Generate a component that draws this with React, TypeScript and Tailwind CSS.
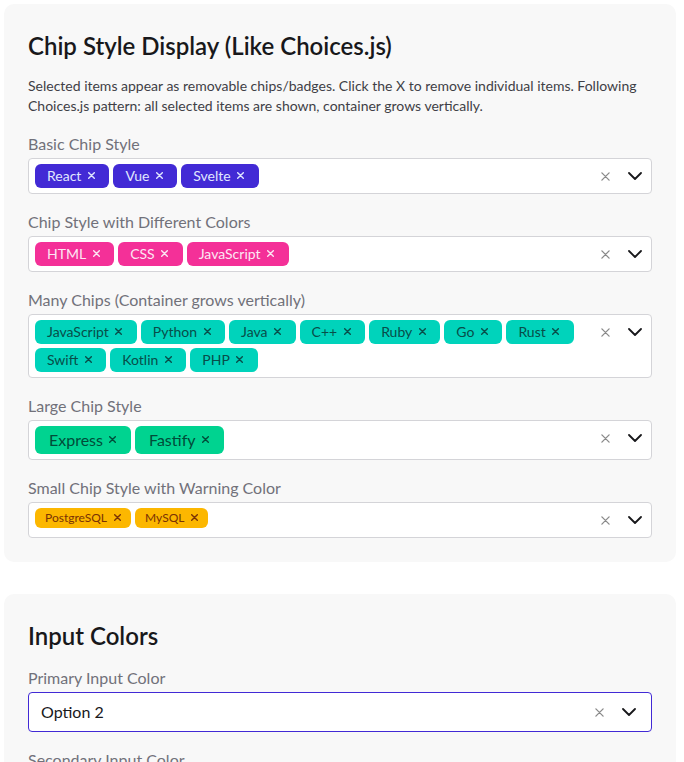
import type { ReactNode } from 'react'

/**
 * Chip style select demo
 * Static recreation of a Choices.js-like multi select with chips
 */

type Tone = 'primary' | 'secondary' | 'accent' | 'success' | 'warning'
type Size = 'sm' | 'md' | 'lg'

const toneClasses: Record<Tone, string> = {
  primary: 'bg-[#422ad5] text-[#e0e7ff]',
  secondary: 'bg-[#f43098] text-[#fce7f3]',
  accent: 'bg-[#00d3bb] text-[#084d49]',
  success: 'bg-[#00d390] text-[#004c39]',
  warning: 'bg-[#fcb700] text-[#793205]',
}

const sizeClasses: Record<Size, string> = {
  sm: 'h-5 pl-2.5 pr-2 text-xs',
  md: 'h-6 px-3 text-sm',
  lg: 'h-7 pl-3.5 pr-3 text-base',
}

const FONT = 'font-["Lato","Liberation_Sans",sans-serif]'

function CloseGlyph({ size = 7, width = 1.4 }: { size?: number; width?: number }) {
  return (
    <svg width={size} height={size} viewBox="0 0 10 10" fill="none">
      <path d="M1 1l8 8M9 1l-8 8" stroke="currentColor" strokeWidth={width * (10 / size)} strokeLinecap="round" />
    </svg>
  )
}

function Indicators() {
  return (
    <div className="flex h-6 items-center">
      <span className="flex w-[30px] justify-center text-[#8a8a8a]">
        <CloseGlyph size={9} width={1.3} />
      </span>
      <span className="flex w-[30px] justify-center text-[#18181b]">
        <svg width="14" height="8" viewBox="0 0 14 8" fill="none">
          <path d="M1 1l6 6 6-6" stroke="currentColor" strokeWidth="1.8" strokeLinecap="round" strokeLinejoin="round" />
        </svg>
      </span>
    </div>
  )
}

function Chip({ label, tone, size }: { label: string; tone: Tone; size: Size }) {
  return (
    <span className={`inline-flex items-center gap-1 rounded-md ${toneClasses[tone]} ${sizeClasses[size]}`}>
      <span className="leading-none">{label}</span>
      <span className="-mt-0.5 flex w-3 justify-center">
        <CloseGlyph />
      </span>
    </span>
  )
}

function Field({ label, children }: { label: string; children: ReactNode }) {
  return (
    <div>
      <div className="mb-0.5 text-base leading-6 text-[#71717a]">{label}</div>
      {children}
    </div>
  )
}

function ChipSelect({ items, tone, size = 'md' }: { items: string[]; tone: Tone; size?: Size }) {
  return (
    <div className="flex min-h-9 items-start rounded border border-[#d4d4d8] bg-white py-[5px] pl-[6px] pr-px">
      <div className="flex flex-1 flex-wrap gap-1">
        {items.map((item) => (
          <Chip key={item} label={item} tone={tone} size={size} />
        ))}
      </div>
      <Indicators />
    </div>
  )
}

function SingleSelect({ value, border }: { value: string; border: string }) {
  return (
    <div className={`flex h-10 items-center rounded border bg-white pl-3 pr-[7px] ${border}`}>
      <span className="flex-1 text-base text-[#18181b]">{value}</span>
      <Indicators />
    </div>
  )
}

function Card({ title, children }: { title: string; children: ReactNode }) {
  return (
    <section className="mb-8 rounded-[10px] bg-[#f8f8f8] p-6">
      <h2 className="mt-0.5 mb-3.5 text-2xl leading-8 font-semibold text-[#18181b]">{title}</h2>
      {children}
    </section>
  )
}

export default function App() {
  return (
    <div className={`min-h-screen bg-white pt-1 pr-2 pl-1 ${FONT}`}>
      <Card title="Chip Style Display (Like Choices.js)">
        <p className="mb-4 text-sm leading-5 text-[#3f3f46]">
          Selected items appear as removable chips/badges. Click the X to remove individual items. Following
          Choices.js pattern: all selected items are shown, container grows vertically.
        </p>
        <div className="flex flex-col gap-4">
          <Field label="Basic Chip Style">
            <ChipSelect items={['React', 'Vue', 'Svelte']} tone="primary" />
          </Field>
          <Field label="Chip Style with Different Colors">
            <ChipSelect items={['HTML', 'CSS', 'JavaScript']} tone="secondary" />
          </Field>
          <Field label="Many Chips (Container grows vertically)">
            <ChipSelect
              items={['JavaScript', 'Python', 'Java', 'C++', 'Ruby', 'Go', 'Rust', 'Swift', 'Kotlin', 'PHP']}
              tone="accent"
            />
          </Field>
          <Field label="Large Chip Style">
            <ChipSelect items={['Express', 'Fastify']} tone="success" size="lg" />
          </Field>
          <Field label="Small Chip Style with Warning Color">
            <ChipSelect items={['PostgreSQL', 'MySQL']} tone="warning" size="sm" />
          </Field>
        </div>
      </Card>

      <Card title="Input Colors">
        <div className="flex flex-col gap-4">
          <Field label="Primary Input Color">
            <SingleSelect value="Option 2" border="border-[#422ad5]" />
          </Field>
          <Field label="Secondary Input Color">
            <SingleSelect value="Option 1" border="border-[#f43098]" />
          </Field>
          <Field label="Accent Input Color">
            <SingleSelect value="Option 3" border="border-[#00d3bb]" />
          </Field>
        </div>
      </Card>
    </div>
  )
}
